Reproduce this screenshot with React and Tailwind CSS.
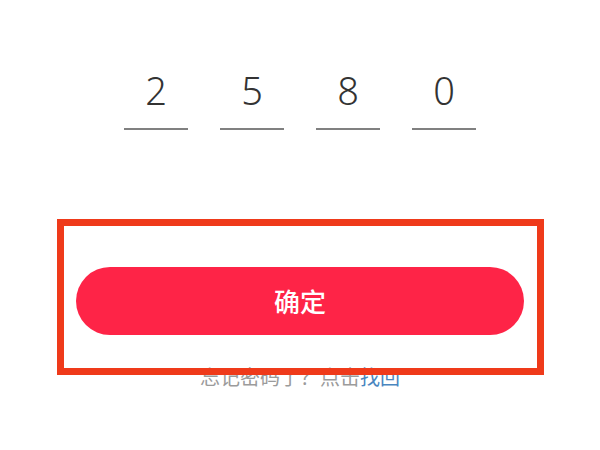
// 支付密码确认页：四位验证码 + 确定按钮 + 找回密码链接
const CODE = ['2', '5', '8', '0'];

function CodeCell({ value }) {
  return (
    <div className="flex w-16 flex-col items-center">
      <span className="text-[38px] font-[350] leading-[39px] text-[#333]">{value}</span>
      <span className="mt-[18px] block h-[2px] w-16 bg-[#808080]" />
    </div>
  );
}

export default function App() {
  return (
    <div
      className="relative flex h-[450px] w-[600px] flex-col items-center overflow-hidden bg-white"
      style={{ fontFamily: '"Noto Sans", "Noto Sans CJK SC", sans-serif' }}
    >
      <div className="mt-[71px] flex gap-8">
        {CODE.map((d, i) => (
          <CodeCell key={i} value={d} />
        ))}
      </div>

      <button
        type="button"
        className="mt-[137px] flex h-[68px] w-[448px] items-center justify-center rounded-full bg-[#fe2447] text-[26px] font-medium leading-none text-white"
        style={{ fontFamily: '"Noto Sans CJK SC", sans-serif' }}
      >
        确定
      </button>

      <p
        className="mt-[32px] text-[20px] leading-[20px] text-[#9b9b9b]"
        style={{ fontFamily: '"Noto Sans CJK SC", sans-serif' }}
      >
        忘记密码了？点击<span className="text-[#4a86bf]">找回</span>
      </p>

      {/* 标注框 */}
      <div className="pointer-events-none absolute left-[57px] top-[219px] h-[156px] w-[487px] border-[7px] border-[#ef3a1a]" />
    </div>
  );
}
